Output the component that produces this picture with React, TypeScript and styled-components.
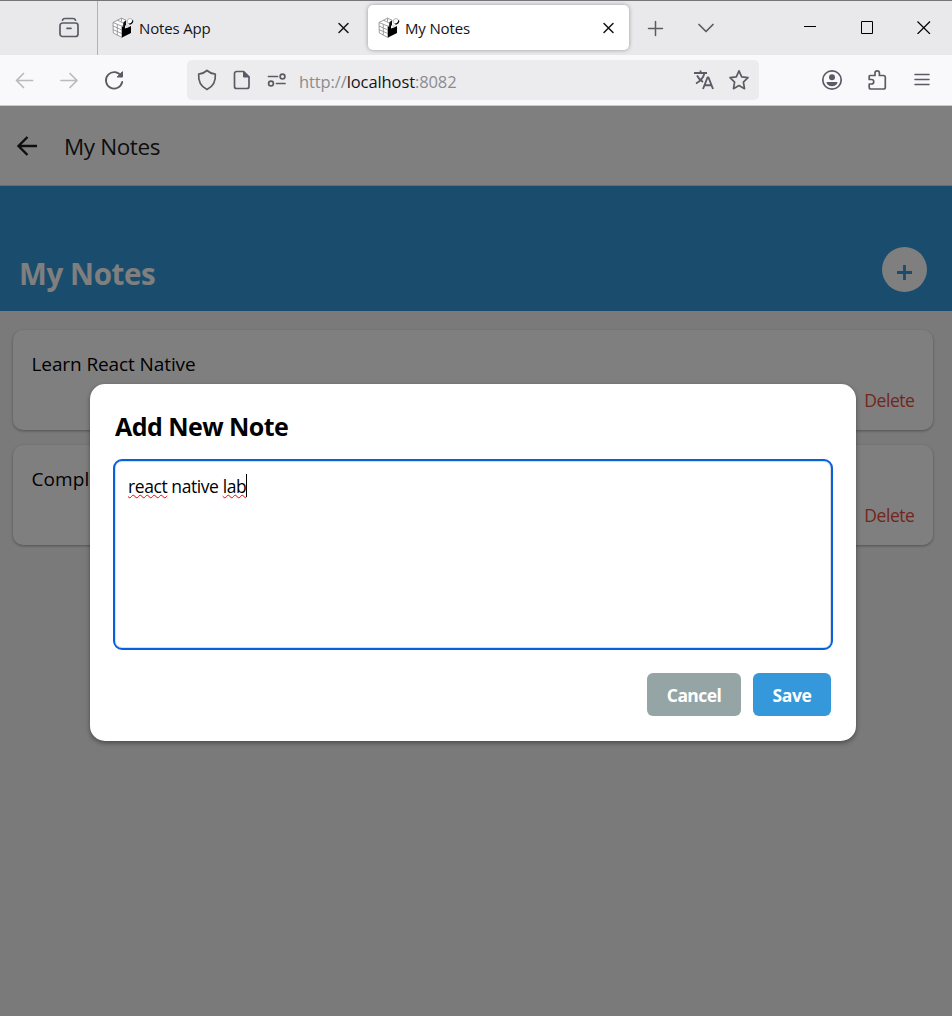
import React from 'react';
import styled, { createGlobalStyle } from 'styled-components';

const GlobalStyle = createGlobalStyle`
  *, *::before, *::after { box-sizing: border-box; }
  body {
    margin: 0;
    font-family: 'Open Sans', 'Noto Sans', sans-serif;
    color: #000;
  }
  svg { display: block; flex: none; }
`;

/* ---------- browser chrome ---------- */

const Window = styled.div`
  display: flex;
  flex-direction: column;
  width: 952px;
  height: 1016px;
  overflow: hidden;
`;

const TabStrip = styled.div`
  display: flex;
  align-items: stretch;
  height: 55px;
  flex: none;
  background: #e9e9eb;
  border-top: 1px solid #77757a;
`;

const ViewButton = styled.div`
  display: flex;
  align-items: center;
  justify-content: flex-end;
  width: 98px;
  padding-right: 17px;
  border-right: 1px solid #b2b2b6;
`;

const Tab = styled.div<{ $active?: boolean }>`
  display: flex;
  align-items: center;
  width: ${p => (p.$active ? 261 : 260)}px;
  height: 45px;
  margin: 4px 0 0 ${p => (p.$active ? 10 : 0)}px;
  padding: 0 ${p => (p.$active ? 14 : 8)}px 0 ${p => (p.$active ? 10 : 14)}px;
  border-radius: 5px;
  background: ${p => (p.$active ? '#fff' : 'transparent')};
  box-shadow: ${p => (p.$active ? '0 0 4px rgba(0, 0, 0, 0.35)' : 'none')};
`;

const TabTitle = styled.span`
  flex: 1;
  margin: 1px 0 0 5px;
  font-size: 15px;
  line-height: 20px;
  letter-spacing: -0.15px;
  color: #15141a;
`;

const StripButtons = styled.div`
  display: flex;
  align-items: center;
  gap: 32px;
  margin-left: 17px;
`;

const WindowButtons = styled.div`
  display: flex;
  align-items: center;
  gap: 43px;
  margin-left: auto;
  padding: 0 21px 2px 0;
`;

const NavBar = styled.div`
  display: flex;
  align-items: center;
  height: 51px;
  flex: none;
  padding: 0 19px 1px 13px;
  background: #f9f9fb;
  border-bottom: 1px solid #ccccd0;
`;

const NavButtons = styled.div`
  display: flex;
  align-items: center;
  gap: 22px;
  width: 174px;
`;

const UrlBar = styled.div`
  display: flex;
  align-items: center;
  width: 572px;
  height: 40px;
  padding: 0 9px 0 8px;
  border-radius: 5px;
  background: #ececee;
`;

const UrlIcons = styled.div<{ $gap: number }>`
  display: flex;
  align-items: center;
  gap: ${p => p.$gap}px;
`;

const Url = styled.span`
  flex: 1;
  margin: 4px 0 0 12px;
  font-size: 16.5px;
  line-height: 22px;
  letter-spacing: -0.1px;
  color: #8b8b90;
  b { font-weight: 400; color: #15141a; }
`;

const MenuButtons = styled.div`
  display: flex;
  align-items: center;
  gap: 23px;
  margin-left: auto;
`;

/* ---------- page ---------- */

const Page = styled.main`
  position: relative;
  display: flex;
  flex-direction: column;
  flex: 1;
  background: #f5f5f5;
`;

const ScreenHeader = styled.header`
  display: flex;
  align-items: center;
  height: 80px;
  padding-left: 15px;
  background: #fff;
  border-bottom: 1px solid #d8d8d8;
`;

const ScreenTitle = styled.span`
  margin: 2px 0 0 25px;
  font-size: 22.5px;
  line-height: 30px;
  letter-spacing: -0.4px;
  color: #1c1c1e;
`;

const Banner = styled.section`
  display: flex;
  align-items: flex-end;
  justify-content: space-between;
  height: 125px;
  padding: 0 25px 19px 19px;
  background: #3498db;
`;

const BannerTitle = styled.h1`
  margin: 0 0 -2px;
  font-size: 29.5px;
  line-height: 40px;
  font-weight: 700;
  letter-spacing: -0.4px;
  color: #fff;
`;

const AddButton = styled.div`
  display: flex;
  align-items: center;
  justify-content: center;
  width: 45px;
  height: 45px;
  padding-top: 5px;
  border-radius: 50%;
  background: #fff;
`;

const NoteList = styled.section`
  display: flex;
  flex-direction: column;
  gap: 15px;
  padding: 19px 19px 0 13px;
`;

const NoteCard = styled.article`
  display: flex;
  flex-direction: column;
  justify-content: space-between;
  height: 100px;
  padding: 21px 18.5px 17px;
  border-radius: 10px;
  background: #fff;
  box-shadow: 0 1px 3px rgba(0, 0, 0, 0.35);
`;

const NoteText = styled.span<{ $spacing: number }>`
  font-size: 19px;
  line-height: 26px;
  letter-spacing: ${p => p.$spacing}px;
`;

const DeleteLink = styled.span`
  align-self: flex-end;
  font-size: 17.5px;
  line-height: 26px;
  letter-spacing: -0.45px;
  color: #e74c3c;
`;

/* ---------- modal ---------- */

const Overlay = styled.div`
  position: absolute;
  inset: 0;
  display: flex;
  align-items: flex-start;
  padding: 278px 0 0 90px;
  background: rgba(0, 0, 0, 0.5);
`;

const Dialog = styled.section`
  display: flex;
  flex-direction: column;
  width: 766px;
  height: 357px;
  padding: 24px 25px 25px;
  border-radius: 15px;
  background: #fff;
  box-shadow: 0 2px 5px rgba(0, 0, 0, 0.4);
`;

const DialogTitle = styled.h2`
  margin: 0;
  font-size: 25px;
  line-height: 36px;
  font-weight: 700;
  letter-spacing: -0.55px;
`;

const NoteField = styled.div`
  display: flex;
  align-items: flex-start;
  height: 187px;
  margin-top: 17px;
  padding: 12px;
  border: 1px solid #ddd;
  border-radius: 7px;
  outline: 2px solid #0561e0;
  font-size: 17.5px;
  line-height: 25px;
  letter-spacing: -0.42px;
  white-space: pre;
`;

const Misspelled = styled.span`
  text-decoration: underline wavy #f00 1.3px;
  text-decoration-skip-ink: none;
  text-underline-offset: 1px;
`;

const Caret = styled.i`
  width: 1px;
  height: 23px;
  background: #000;
`;

const DialogActions = styled.div`
  display: flex;
  justify-content: flex-end;
  gap: 12px;
  margin-top: 25px;
`;

const ActionButton = styled.div<{ $color: string; $width: number; $spacing: number }>`
  width: ${p => p.$width}px;
  height: 43px;
  padding-top: 10px;
  border-radius: 6px;
  background: ${p => p.$color};
  color: #fff;
  font-size: 17.5px;
  line-height: 25px;
  font-weight: 700;
  letter-spacing: ${p => p.$spacing}px;
  text-align: center;
`;

/* ---------- icons ---------- */

const Stroke = ({ w = 22, h = 22, color = '#5b5b66', width = 1.7, children }: {
  w?: number; h?: number; color?: string; width?: number; children: React.ReactNode;
}) => (
  <svg width={w} height={h} viewBox={`0 0 ${w} ${h}`} fill="none" stroke={color}
    strokeWidth={width} strokeLinecap="round" strokeLinejoin="round">
    {children}
  </svg>
);

const CubeIcon = () => (
  <svg width="22" height="22" viewBox="0 0 22 22">
    <path d="M1 5.500 9.500 1.200 14 3.200 13 8.500 10 10v10.500L1.300 16Z" fill="#fff" stroke="#888" strokeWidth="0.800" />
    <path d="M1 5.500 10 9.200 14 7M5.500 3.200 13 7M9.500 1.200v3.500M5.300 7.500v10.500M1 9l9 4M1 12.600l9 4M10 9v11.500" fill="none" stroke="#888" strokeWidth="0.800" />
    <path d="M10 10 13 8.500V11.500l3-1 3-1.500V16l-9 4.500Z" fill="#000" />
    <path d="m11.500 5 2.500-1.500v5L11 9.500Z" fill="#111" />
    <circle cx="18" cy="4.300" r="2.700" fill="#fff" stroke="#999" strokeWidth="0.700" />
    <path d="M20.700 3.300a2.800 2.800 0 0 1-3.400 3.700c1.800-.4 3-1.700 3.400-3.700Z" fill="#000" stroke="#000" strokeWidth="0.600" />
    <path d="m13 9 2.500-1.500 2.500 1.300-2.500 1.700Z" fill="#ddd" />
  </svg>
);

const CloseTab = () => (
  <Stroke w={14} h={14} color="#15141a" width={1.500}><path d="m3 2.500 9 9m0-9-9 9" /></Stroke>
);

const BrowserTab = ({ title, active }: { title: string; active?: boolean }) => (
  <Tab $active={active}>
    <CubeIcon />
    <TabTitle>{title}</TabTitle>
    <CloseTab />
  </Tab>
);

const Note = ({ text, spacing = -0.1 }: { text: string; spacing?: number }) => (
  <NoteCard>
    <NoteText $spacing={spacing}>{text}</NoteText>
    <DeleteLink>Delete</DeleteLink>
  </NoteCard>
);

export default function App() {
  return (
    <Window>
      <GlobalStyle />
      <TabStrip>
        <ViewButton>
          <Stroke>
            <path d="M4.500 3.200Q5 1.500 7 1.500h8q2 0 2.500 1.700" />
            <rect x="2" y="6" width="18" height="13.500" rx="2.500" />
            <path d="M9 11.300h4" />
          </Stroke>
        </ViewButton>
        <BrowserTab title="Notes App" />
        <BrowserTab title="My Notes" active />
        <StripButtons>
          <Stroke w={18} h={18} width={1.500}><path d="M9.500 2.500v14M2.500 9.500h14" /></Stroke>
          <Stroke w={18} h={18} width={1.700}><path d="m3 5.500 7 7 7-7" /></Stroke>
        </StripButtons>
        <WindowButtons>
          <svg width="14" height="14" viewBox="0 0 14 14"><path d="M1 6.500h12" stroke="#000" /></svg>
          <svg width="14" height="14" viewBox="0 0 14 14"><path d="M1.500 1.500h11v12h-11z" fill="none" stroke="#000" strokeWidth="1" /></svg>
          <svg width="14" height="14" viewBox="0 0 14 14"><path d="m.500 1.500 12.500 12.500m0-12.500L.500 14" fill="none" stroke="#000" strokeWidth="1.200" /></svg>
        </WindowButtons>
      </TabStrip>

      <NavBar>
        <NavButtons>
          <Stroke w={23} color="#bababe"><path d="M19.500 11.500H3.500m7-7-7 7 7 7" /></Stroke>
          <Stroke w={23} color="#bababe"><path d="M3 11.500h16m-7-7 7 7-7 7" /></Stroke>
          <Stroke w={23} width={1.800}>
            <path d="M18.300 7.300A8.200 8.200 0 1 0 19.200 13" />
            <path d="M19.500 3v5h-5z" fill="#5b5b66" strokeWidth="1" />
          </Stroke>
        </NavButtons>
        <UrlBar>
          <UrlIcons $gap={12}>
            <Stroke w={24}><path d="M12 1.500c2.500 2.300 5 3.300 8.300 3.600.5 6-1.300 12-8.300 15.400C5 17.100 3.200 11.100 3.700 5.100 7 4.800 9.500 3.800 12 1.500Z" /></Stroke>
            <Stroke w={22}>
              <path d="M12.500 2.500H5.500a2 2 0 0 0-2 2v13a2 2 0 0 0 2 2h10.500a2 2 0 0 0 2-2V8Z" />
              <path d="M12.500 2.500V8H18Z" fill="#5b5b66" strokeWidth="1" />
            </Stroke>
            <Stroke w={22}>
              <path d="M3.500 7.500h9M11.500 14.500h8.500" />
              <circle cx="17.500" cy="7.500" r="2.400" /><circle cx="6" cy="14.500" r="2.400" />
            </Stroke>
          </UrlIcons>
          <Url>http://<b>localhost</b>:8082</Url>
          <UrlIcons $gap={13}>
            <Stroke>
              <path d="M1 4h13M7.500 1.500V4M3 14.500C7.500 12 10.500 8.500 11.500 4M4 6.500c1.500 3 3.500 5 6 6.500" strokeWidth="1.800" strokeLinecap="butt" />
              <path d="m10 20 4.500-11.500h1L20 20M11.800 16.300h6.500" strokeWidth="1.900" strokeLinecap="butt" />
            </Stroke>
            <Stroke><path d="m11 1.800 2.700 6 6.300.8-4.600 4.500 1.100 6.600L11 16.600l-5.500 3.100 1.100-6.600L2 8.600l6.300-.8Z" /></Stroke>
          </UrlIcons>
        </UrlBar>
        <MenuButtons>
          <Stroke>
            <circle cx="11" cy="11" r="9.200" />
            <circle cx="11" cy="8.300" r="3" fill="#5b5b66" stroke="none" />
            <path d="M5.500 13h11a5.500 4.300 0 0 1-11 0Z" fill="#5b5b66" stroke="none" />
          </Stroke>
          <Stroke><path d="M4 6.500h5V4a2.200 2.200 0 0 1 4.400 0v2.500H17.500a1.800 1.800 0 0 1 1.800 1.800V18.200A1.800 1.800 0 0 1 17.500 20H5a1.800 1.800 0 0 1-1.800-1.800V15H5.500a2.200 2.200 0 0 0 0-4.500H3.200V7.300Q3.200 6.500 4 6.500Z" /></Stroke>
          <Stroke width={1.500}><path d="M4 5.500h14M4 10.500h14M4 15.500h14" /></Stroke>
        </MenuButtons>
      </NavBar>

      <Page>
        <ScreenHeader>
          <svg width="24" height="24" viewBox="0 0 24 24" fill="none" stroke="#1c1c1e" strokeWidth="2.400">
            <path d="M22 12H4M12.500 3 3.500 12l9 9" />
          </svg>
          <ScreenTitle>My Notes</ScreenTitle>
        </ScreenHeader>
        <Banner>
          <BannerTitle>My Notes</BannerTitle>
          <AddButton>
            <svg width="15" height="15" viewBox="0 0 15 15"><path d="M7.500 0v15M0 7.500h15" stroke="#3498db" strokeWidth="2.800" /></svg>
          </AddButton>
        </Banner>
        <NoteList>
          <Note text="Learn React Native" />
          <Note text="Compl" spacing={0.1} />
        </NoteList>

        <Overlay>
          <Dialog>
            <DialogTitle>Add New Note</DialogTitle>
            <NoteField>
              <Misspelled>react</Misspelled>{' native '}<Misspelled>lab</Misspelled>
              <Caret />
            </NoteField>
            <DialogActions>
              <ActionButton $color="#95a5a6" $width={94} $spacing={-0.6}>Cancel</ActionButton>
              <ActionButton $color="#3498db" $width={78} $spacing={-0.35}>Save</ActionButton>
            </DialogActions>
          </Dialog>
        </Overlay>
      </Page>
    </Window>
  );
}
